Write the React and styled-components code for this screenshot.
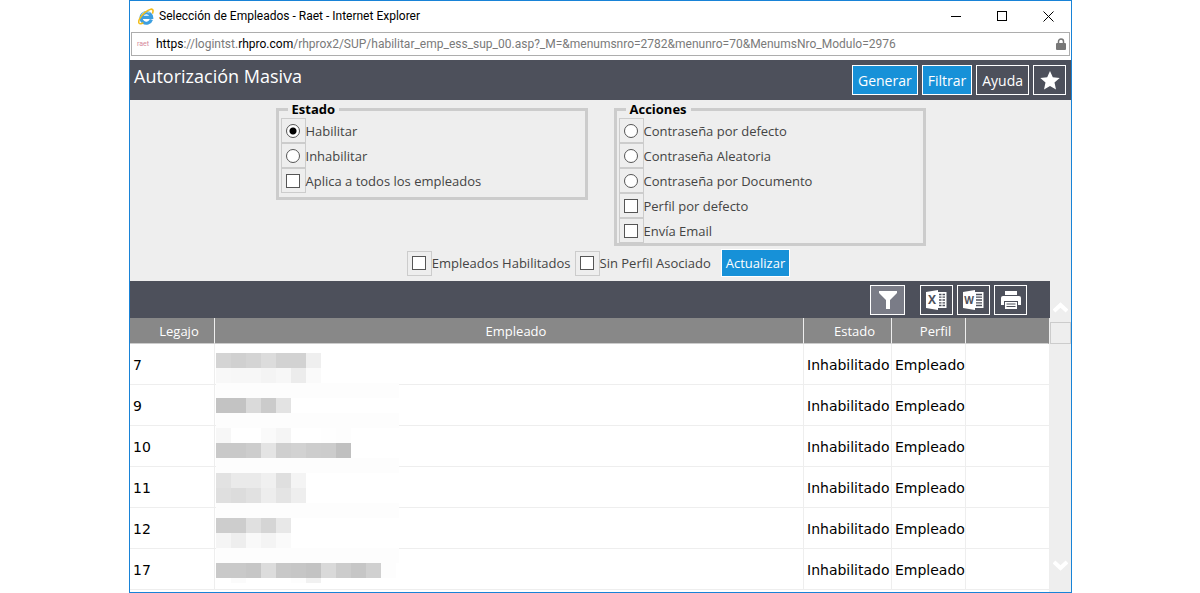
import { useState } from "react";
import styled, { createGlobalStyle } from "styled-components";

const GlobalStyle = createGlobalStyle`
  * {
    box-sizing: border-box;
  }

  body {
    margin: 0;
    background-color: #fff;
    font-family: "Open Sans", "Noto Sans", sans-serif;
    font-size: 13px;
    color: #444;
  }

  button,
  input {
    font-family: inherit;
    margin: 0;
  }
`;

const Window = styled.div`
  margin: 0 128px 0 129px;
  border: 1px solid #1883d7;
  background-color: #fff;
`;

const TitleBar = styled.div`
  display: flex;
  align-items: center;
  height: 30px;
  padding-left: 8px;
  font-family: Roboto, sans-serif;
  font-size: 12px;
  color: #000;
`;

const WindowTitle = styled.span`
  flex: 1;
  margin-left: 5px;
`;

const WindowControl = styled.button`
  display: flex;
  align-items: center;
  justify-content: center;
  width: 46px;
  height: 30px;
  padding: 0;
  border: 0;
  background-color: transparent;
`;

const AddressBar = styled.div`
  display: flex;
  align-items: center;
  height: 24px;
  margin: 1px 1px 4px;
  padding: 0 3px 0 5px;
  border: 1px solid #adadad;
  font-family: Roboto, sans-serif;
  font-size: 12px;
  color: #7a7a7a;
`;

const Favicon = styled.span`
  width: 19px;
  font-size: 7px;
  line-height: 10px;
  color: #d58a9a;
`;

const Url = styled.span`
  flex: 1;
  white-space: nowrap;
  overflow: hidden;
`;

const UrlStrong = styled.span`
  color: #000;
`;

const Header = styled.header`
  display: flex;
  justify-content: space-between;
  height: 40px;
  padding: 5px 5px 5px 4px;
  background-color: #4d505b;
`;

const Title = styled.h1`
  margin: 0;
  font-size: 18px;
  line-height: 22px;
  font-weight: 400;
  color: #fff;
`;

const HeaderActions = styled.div`
  display: flex;
  gap: 4px;
`;

const Button = styled.button`
  height: ${(props) => (props.$small ? "28px" : "30px")};
  padding: ${(props) => (props.$small ? "0 4px" : "0 5px")};
  border: 1px solid #fff;
  background-color: ${(props) => (props.$primary ? "#1791d8" : "transparent")};
  color: #fff;
  font-size: ${(props) => (props.$small ? "13px" : "14px")};
`;

const IconButton = styled.button`
  display: flex;
  align-items: center;
  justify-content: center;
  width: 33px;
  height: 30px;
  padding: 0;
  border: 1px solid #fff;
  background-color: ${(props) => (props.$active ? "#7a7c87" : "transparent")};
`;

const FilterButton = styled(IconButton)`
  width: 35px;
  margin-right: 11px;
`;

const Form = styled.form`
  padding-bottom: 4px;
  background-color: #eee;
`;

const Groups = styled.div`
  display: flex;
  justify-content: center;
  align-items: flex-start;
  gap: 26px;
`;

const Group = styled.fieldset`
  flex: 0 1 312px;
  min-width: 0;
  margin: 0;
  padding: 0 2px ${(props) => (props.$roomy ? "4px" : "0")};
  border: 3px solid #ccc;
`;

const GroupTitle = styled.legend`
  margin-left: 7px;
  padding: 0 4px;
  line-height: 18px;
  font-weight: 700;
  color: #000;
`;

const Option = styled.label`
  display: flex;
  align-items: center;
  height: 25px;
  white-space: nowrap;
`;

const OptionBox = styled.span`
  display: flex;
  align-items: center;
  justify-content: center;
  width: 25px;
  height: 25px;
  border: 1px solid #ccc;
`;

const Check = styled.input`
  appearance: none;
  width: 14px;
  height: 14px;
  border: 1px solid #555;
  background-color: #fff;

  &[type="radio"] {
    border-radius: 50%;
  }

  &[type="radio"]:checked {
    background-image: radial-gradient(#000 3px, transparent 4px);
  }
`;

const FilterRow = styled.div`
  display: flex;
  justify-content: center;
  align-items: center;
  gap: 4px;
  height: 28px;
  margin-top: 3px;
  padding-right: 4px;

  button {
    margin-left: 6px;
  }
`;

const DataArea = styled.div`
  display: grid;
  grid-template-columns: minmax(0, 1fr) 21px;
`;

const DataPanel = styled.div`
  padding-bottom: 2px;
  border-right: 1px solid #eee;
`;

const Toolbar = styled.div`
  display: flex;
  align-items: center;
  justify-content: flex-end;
  gap: 4px;
  height: 37px;
  margin-right: -1px;
  padding-right: 23px;
  background-color: #4d505b;
`;

const Table = styled.table`
  width: 100%;
  table-layout: fixed;
  border-collapse: separate;
  border-spacing: 0;
`;

const Col = styled.col`
  width: ${(props) => props.$width};
`;

const HeadCell = styled.th`
  height: 26px;
  padding: 0 0 0 14px;
  border-right: 1px solid ${(props) => (props.$last ? "#888" : "#eee")};
  border-bottom: 1px solid #ccc;
  background-color: #888;
  color: #fff;
  font-weight: 400;
`;

const Cell = styled.td`
  position: relative;
  height: 41px;
  padding: 2px 0 0 3px;
  border-right: ${(props) => (props.$last ? "0" : "1px solid #eee")};
  border-bottom: 1px solid #eee;
  font-family: "DejaVu Sans", sans-serif;
  font-size: 14px;
  color: #000;
  white-space: nowrap;
`;

const Mosaic = styled.div`
  position: absolute;
  top: 9px;
  left: 1px;
  z-index: 1;
  width: 183px;
  height: 230px;
  overflow: hidden;
`;

const MosaicRow = styled.div`
  display: flex;
  height: 15px;
  background-color: ${(props) => (props.$veil ? "#fdfdfd" : "#fff")};
`;

const MosaicTile = styled.span`
  width: 15px;
`;

const ScrollBar = styled.div`
  display: flex;
  flex-direction: column;
  align-items: center;
  padding: 20px 0;
  background-color: #eee;
`;

const ScrollThumb = styled.div`
  width: 21px;
  height: 22px;
  margin-top: 9px;
  margin-bottom: auto;
  border: 1px solid #ccc;
`;

const columns = [
  { label: "Legajo", width: "85px" },
  { label: "Empleado", width: "auto" },
  { label: "Estado", width: "88px" },
  { label: "Perfil", width: "74px" },
  { label: "", width: "83px" },
];

const employees = [7, 9, 10, 11, 12, 17].map((legajo) => ({
  legajo,
  estado: "Inhabilitado",
  perfil: "Empleado",
}));

// Grey levels of the tiles that hide the names, "veil" is an empty strip.
const mosaic = [
  "d4 d0 d4 dc d2 d2 ef",
  "f8 f7 f7 f4 f7 ec fa",
  "veil",
  "c3 c3 da cb e3",
  "veil",
  "f7 ff ff fa f5 ff ff fe fd",
  "c9 c9 cd e4 cf d2 cd cc c0",
  "veil",
  "e2 ea ea f0 df f4",
  "df dc e1 ed e4 ee",
  "veil",
  "cd cd e0 d5 e8",
  "f5 ee f9 f4 fa",
  "veil",
  "c9 c9 c6 dc c8 c6 c3 d9 cc c6 d0 fd",
  "ff fb ff ff ff fd f1",
];

function HiddenNames() {
  return (
    <Mosaic>
      {mosaic.map((row, i) => (
        <MosaicRow key={i} $veil={row === "veil"}>
          {row !== "veil" &&
            row
              .split(" ")
              .map((g, j) => (
                <MosaicTile key={j} style={{ backgroundColor: `#${g}${g}${g}` }} />
              ))}
        </MosaicRow>
      ))}
    </Mosaic>
  );
}

function ExplorerIcon() {
  return (
    <svg width="16" height="17" viewBox="0 0 16 17" fill="none">
      <path
        d="M13.400 11.500A5.300 5.300 0 1 1 13.600 9.300H4.500"
        stroke="#3d9fe0"
        strokeWidth="3.200"
      />
      <path d="M3.600 7.200a4.800 4.800 0 0 1 8-2" stroke="#9bdcf8" strokeWidth="1.200" />
      <path
        d="M14.400 5.600C15.700 2.600 15 .8 12.800 1.200 9.500 1.800 3.600 6.600 1.500 11c-1.400 3-.9 5 1 4.800 1-.1 2-.6 2.900-1.200"
        stroke="#f2bd1d"
        strokeWidth="1.600"
      />
    </svg>
  );
}

function LockIcon() {
  return (
    <svg width="10" height="12" viewBox="0 0 10 12">
      <path d="M2.500 6V3.500a2.500 2.500 0 0 1 5 0V6" fill="none" stroke="#777" strokeWidth="1.500" />
      <rect y="5" width="10" height="7" rx="1" fill="#777" />
    </svg>
  );
}

function StarIcon() {
  return (
    <svg width="20" height="19" viewBox="0 0 20 19">
      <path
        d="M10 0l2.800 6.300 6.900.7-5.200 4.600 1.500 6.800-6-3.500-6 3.500 1.500-6.800L.3 7l6.900-.7z"
        fill="#fff"
      />
    </svg>
  );
}

function FunnelIcon() {
  return (
    <svg width="20" height="18" viewBox="0 0 20 18">
      <path d="M1 0h18v2l-7 7v9H8V9L1 2z" fill="#fff" />
    </svg>
  );
}

function SheetIcon({ letter }) {
  return (
    <svg width="21" height="20" viewBox="0 0 21 20">
      <path d="M11 2h9.500v16H11z" fill="#fff" />
      {letter === "X" ? (
        <path
          d="M13 4.500h2.500M16.500 4.500H19M13 7.200h2.500M16.500 7.200H19M13 10h2.500M16.500 10H19M13 12.800h2.500M16.500 12.800H19M13 15.500h2.500M16.500 15.500H19"
          stroke="#4d505b"
          strokeWidth="1.300"
        />
      ) : (
        <path
          d="M13 4.500h6M13 7.200h6M13 10h6M13 12.800h6M13 15.500h6"
          stroke="#4d505b"
          strokeWidth="1.300"
        />
      )}
      <path d="M0 2L12 0v20L0 18z" fill="#fff" />
      <text
        x="6"
        y="14"
        textAnchor="middle"
        fontFamily="Open Sans, sans-serif"
        fontSize={letter === "X" ? 12 : 10}
        fontWeight="700"
        fill="#4d505b"
      >
        {letter}
      </text>
    </svg>
  );
}

function PrinterIcon() {
  return (
    <svg width="20" height="18" viewBox="0 0 20 18">
      <path d="M4 0h12v4H4z" fill="#fff" />
      <path d="M2 5h16a2 2 0 0 1 2 2v7H0V7a2 2 0 0 1 2-2z" fill="#fff" />
      <path d="M3 10h14v8H3z" fill="#4d505b" />
      <path d="M4 11h12v7H4z" fill="#fff" />
      <path d="M5.500 13h9M5.500 15.500h9" stroke="#4d505b" />
    </svg>
  );
}

function ScrollArrow({ down }) {
  return (
    <svg width="15" height="12" viewBox="0 0 15 12">
      <path
        d={down ? "M1 2l6.500 6L14 2" : "M1 10l6.500-6L14 10"}
        fill="none"
        stroke="#fff"
        strokeWidth="4"
      />
    </svg>
  );
}

function Choice({ label, ...rest }) {
  return (
    <Option>
      <OptionBox>
        <Check {...rest} />
      </OptionBox>
      {label}
    </Option>
  );
}

export default function App() {
  const [estado, setEstado] = useState("Habilitar");
  const [accion, setAccion] = useState("");

  return (
    <>
      <GlobalStyle />
      <Window>
        <TitleBar>
          <ExplorerIcon />
          <WindowTitle>Selección de Empleados - Raet - Internet Explorer</WindowTitle>
          <WindowControl aria-label="Minimizar">
            <svg width="10" height="10">
              <path d="M0 5.500h10" stroke="#000" />
            </svg>
          </WindowControl>
          <WindowControl aria-label="Maximizar">
            <svg width="10" height="10">
              <rect x=".5" y=".5" width="9" height="9" fill="none" stroke="#000" />
            </svg>
          </WindowControl>
          <WindowControl aria-label="Cerrar">
            <svg width="11" height="11">
              <path d="M.5.500l10 10M10.500.500l-10 10" stroke="#000" />
            </svg>
          </WindowControl>
        </TitleBar>
        <AddressBar>
          <Favicon>raet</Favicon>
          <Url>
            <UrlStrong>https</UrlStrong>://logintst.<UrlStrong>rhpro.com</UrlStrong>
            /rhprox2/SUP/habilitar_emp_ess_sup_00.asp?_M=&amp;menumsnro=2782&amp;menunro=70&amp;MenumsNro_Modulo=2976
          </Url>
          <LockIcon />
        </AddressBar>

        <Header>
          <Title>Autorización Masiva</Title>
          <HeaderActions>
            <Button $primary>Generar</Button>
            <Button $primary>Filtrar</Button>
            <Button>Ayuda</Button>
            <IconButton aria-label="Favorito">
              <StarIcon />
            </IconButton>
          </HeaderActions>
        </Header>

        <Form onSubmit={(e) => e.preventDefault()}>
          <Groups>
            <Group $roomy>
              <GroupTitle>Estado</GroupTitle>
              {["Habilitar", "Inhabilitar"].map((name) => (
                <Choice
                  key={name}
                  type="radio"
                  name="estado"
                  label={name}
                  checked={estado === name}
                  onChange={() => setEstado(name)}
                />
              ))}
              <Choice type="checkbox" label="Aplica a todos los empleados" />
            </Group>
            <Group>
              <GroupTitle>Acciones</GroupTitle>
              {[
                "Contraseña por defecto",
                "Contraseña Aleatoria",
                "Contraseña por Documento",
              ].map((name) => (
                <Choice
                  key={name}
                  type="radio"
                  name="accion"
                  label={name}
                  checked={accion === name}
                  onChange={() => setAccion(name)}
                />
              ))}
              <Choice type="checkbox" label="Perfil por defecto" />
              <Choice type="checkbox" label="Envía Email" />
            </Group>
          </Groups>
          <FilterRow>
            <Choice type="checkbox" label="Empleados Habilitados" />
            <Choice type="checkbox" label="Sin Perfil Asociado" />
            <Button $primary $small>
              Actualizar
            </Button>
          </FilterRow>
        </Form>

        <DataArea>
          <DataPanel>
            <Toolbar>
              <FilterButton $active aria-label="Filtro">
                <FunnelIcon />
              </FilterButton>
              <IconButton aria-label="Exportar a Excel">
                <SheetIcon letter="X" />
              </IconButton>
              <IconButton aria-label="Exportar a Word">
                <SheetIcon letter="W" />
              </IconButton>
              <IconButton aria-label="Imprimir">
                <PrinterIcon />
              </IconButton>
            </Toolbar>
            <Table>
              <colgroup>
                {columns.map((col) => (
                  <Col key={col.label} $width={col.width} />
                ))}
              </colgroup>
              <thead>
                <tr>
                  {columns.map((col) => (
                    <HeadCell key={col.label} $last={!col.label}>
                      {col.label}
                    </HeadCell>
                  ))}
                </tr>
              </thead>
              <tbody>
                {employees.map((row, i) => (
                  <tr key={row.legajo}>
                    <Cell>{row.legajo}</Cell>
                    <Cell>{i === 0 && <HiddenNames />}</Cell>
                    <Cell>{row.estado}</Cell>
                    <Cell>{row.perfil}</Cell>
                    <Cell $last />
                  </tr>
                ))}
              </tbody>
            </Table>
          </DataPanel>
          <ScrollBar>
            <ScrollArrow />
            <ScrollThumb />
            <ScrollArrow down />
          </ScrollBar>
        </DataArea>
      </Window>
    </>
  );
}
